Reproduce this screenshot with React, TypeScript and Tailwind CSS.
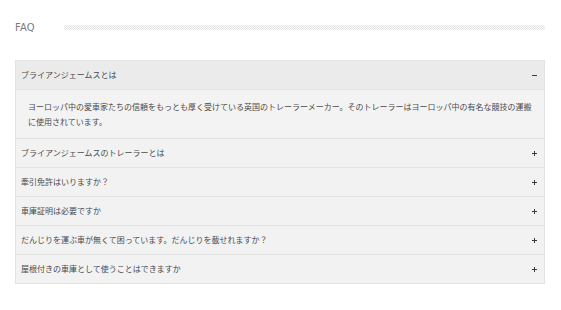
import React from 'react';

const jp = "font-['Noto_Sans_CJK_JP',sans-serif]";

const items = [
    {
        q: 'ブライアンジェームスとは',
        a: [
            'ヨーロッパ中の愛車家たちの信頼をもっとも厚く受けている英国のトレーラーメーカー。そのトレーラーはヨーロッパ中の有名な競技の運搬',
            'に使用されています。',
        ],
    },
    { q: 'ブライアンジェームスのトレーラーとは' },
    { q: '牽引免許はいりますか？' },
    { q: '車庫証明は必要ですか' },
    { q: 'だんじりを運ぶ車が無くて困っています。だんじりを載せれますか？' },
    { q: '屋根付きの車庫として使うことはできますか' },
];

function Toggle({ open }: { open: boolean }) {
    return (
        <svg width="5" height="5" viewBox="0 0 5 5" className="shrink-0">
            <rect x="0" y="2" width="5" height="1" fill="#3a3a3a" />
            {!open && <rect x="2" y="0" width="1" height="5" fill="#3a3a3a" />}
        </svg>
    );
}

export default function App() {
    return (
        <div className="w-[561px] h-[310px] bg-white pt-[20px] pl-[15px] pr-[16px]">
            {/* Section title */}
            <div className="flex items-center h-[14px]">
                <span className="font-['DejaVu_Sans_Condensed','DejaVu_Sans',sans-serif] text-[11px] leading-none text-[#7a7a7a] tracking-[0.3px]">
                    FAQ
                </span>
                <div className="flex-1 ml-[29px] h-[5px] bg-[repeating-conic-gradient(#e2e2e2_0_25%,#ffffff_0_50%)] bg-[length:2px_2px]" />
            </div>

            {/* Accordion */}
            <div className={`mt-[26px] border border-[#e3e3e3] bg-[#f2f2f2] ${jp}`}>
                {items.map((item, i) => {
                    const open = !!item.a;
                    return (
                        <div key={i} className={i > 0 ? 'border-t border-[#e3e3e3]' : ''}>
                            <div
                                className={`h-[28px] flex items-center justify-between pl-[5px] pr-[7px] text-[8px] text-[#4a4a4a] ${
                                    open ? 'bg-[#ebebeb]' : 'bg-[#f2f2f2]'
                                }`}
                            >
                                <span className="whitespace-nowrap">{item.q}</span>
                                <Toggle open={open} />
                            </div>
                            {open && (
                                <div className="border-t border-[#e3e3e3] bg-[#f3f3f3] pt-[9px] pb-[9px] pl-[12px] pr-[6px] text-[8px] leading-[15px] text-[#4a4a4a]">
                                    {item.a!.map((line, j) => (
                                        <div key={j} className="whitespace-nowrap">
                                            {line}
                                        </div>
                                    ))}
                                </div>
                            )}
                        </div>
                    );
                })}
            </div>
        </div>
    );
}
